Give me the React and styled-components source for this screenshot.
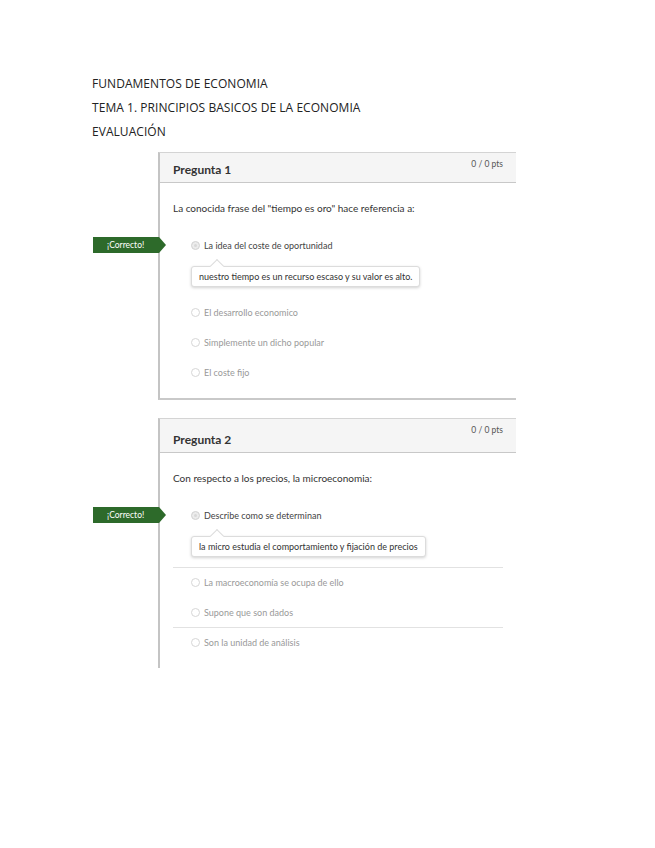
import styled, { createGlobalStyle } from "styled-components";

const GlobalStyle = createGlobalStyle`
  html, body {
    margin: 0;
    padding: 0;
    background: #ffffff;
  }
`;

const questions = [
  {
    title: "Pregunta 1",
    header: 30,
    text: "La conocida frase del \"tiempo es oro\" hace referencia a:",
    answers: [
      {
        text: "La idea del coste de oportunidad",
        selected: true,
        comment: "nuestro tiempo es un recurso escaso y su valor es alto.",
      },
      { text: "El desarrollo economico" },
      { text: "Simplemente un dicho popular" },
      { text: "El coste fijo" },
    ],
    closed: true,
  },
  {
    title: "Pregunta 2",
    header: 34,
    text: "Con respecto a los precios, la microeconomia:",
    answers: [
      {
        text: "Describe como se determinan",
        selected: true,
        comment: "la micro estudia el comportamiento y fijación de precios",
      },
      { text: "La macroeconomía se ocupa de ello", divided: true },
      { text: "Supone que son dados" },
      { text: "Son la unidad de análisis", divided: true },
    ],
    closed: false,
  },
];

export default function App() {
  return (
    <>
      <GlobalStyle />
      <Page>
        <Heading>FUNDAMENTOS DE ECONOMIA</Heading>
        <Heading>TEMA 1. PRINCIPIOS BASICOS DE LA ECONOMIA</Heading>
        <Heading>EVALUACIÓN</Heading>

        {questions.map((q) => (
          <Card key={q.title} $closed={q.closed}>
            <CardHeader $height={q.header}>
              <CardTitle>{q.title}</CardTitle>
              <Points>0 / 0 pts</Points>
            </CardHeader>
            <CardBody>
              <QuestionText>{q.text}</QuestionText>
              <AnswerList>
                {q.answers.map((a) => (
                  <div key={a.text}>
                    <Answer $divided={a.divided}>
                      {a.selected && <Badge>¡Correcto!</Badge>}
                      <Radio $selected={a.selected} />
                      <AnswerText $selected={a.selected}>{a.text}</AnswerText>
                    </Answer>
                    {a.comment && <Comment>{a.comment}</Comment>}
                  </div>
                ))}
              </AnswerList>
            </CardBody>
          </Card>
        ))}
      </Page>
    </>
  );
}

const Page = styled.div`
  padding: 72px 0 120px 92px;
`;

const Heading = styled.div`
  font-family: "Open Sans", "DejaVu Sans", sans-serif;
  font-size: 12px;
  line-height: 24px;
  color: #222;
  letter-spacing: 0.05px;
`;

const Card = styled.div`
  margin: 8px 0 18px 66px;
  width: 356px;
  border-left: 2px solid #c4c4c4;
  border-top: 1px solid #d4d4d4;
  border-bottom: ${(p) => (p.$closed ? "2px solid #c9c9c9" : "none")};
`;

const CardHeader = styled.div`
  height: ${(p) => p.$height}px;
  background: #f5f5f5;
  border-bottom: 1px solid #c8c8c8;
  display: flex;
  justify-content: space-between;
  align-items: flex-start;
  padding: 0 13px 0 13px;
  box-sizing: border-box;
  font-family: Lato, "Open Sans", sans-serif;
`;

const CardTitle = styled.div`
  font-size: 12px;
  font-weight: 700;
  color: #333;
  align-self: flex-end;
  margin-bottom: 5px;
`;

const Points = styled.div`
  font-size: 8.5px;
  color: #555;
  margin-top: 6px;
`;

const CardBody = styled.div`
  padding: 17px 13px 11px 13px;
  font-family: Lato, "Open Sans", sans-serif;
`;

const QuestionText = styled.div`
  font-size: 10px;
  line-height: 16px;
  color: #333;
  margin-bottom: 14px;
`;

const AnswerList = styled.div`
  display: flex;
  flex-direction: column;
`;

const Answer = styled.div`
  position: relative;
  height: 30px;
  display: flex;
  align-items: center;
  padding-left: 18px;
  border-top: ${(p) => (p.$divided ? "1px solid #e2e2e2" : "none")};
  box-sizing: border-box;
`;

const Badge = styled.div`
  position: absolute;
  left: -80px;
  top: 50%;
  transform: translateY(-50%);
  height: 16px;
  width: 66px;
  background: #2d6a2a;
  color: #fff;
  font-size: 8.5px;
  line-height: 16px;
  padding-left: 14px;
  box-sizing: border-box;
  &::after {
    content: "";
    position: absolute;
    right: -7px;
    top: 0;
    border-left: 7px solid #2d6a2a;
    border-top: 8px solid transparent;
    border-bottom: 8px solid transparent;
  }
`;

const Radio = styled.span`
  width: 7px;
  height: 7px;
  border-radius: 50%;
  border: 1px solid #d6d6d6;
  background: ${(p) => (p.$selected ? "#d8d8d8" : "#fff")};
  box-shadow: ${(p) => (p.$selected ? "inset 0 0 0 2px #ececec" : "none")};
  margin-right: 4px;
  flex-shrink: 0;
`;

const AnswerText = styled.span`
  font-size: 9px;
  color: ${(p) => (p.$selected ? "#444" : "#999")};
`;

const Comment = styled.div`
  position: relative;
  align-self: flex-start;
  display: inline-block;
  margin: 6px 0 10px 18px;
  height: 19px;
  line-height: 19px;
  padding: 0 7px;
  font-size: 9px;
  color: #333;
  background: #fff;
  border: 1px solid #dcdcdc;
  border-radius: 3px;
  box-shadow: 0 1px 3px rgba(0, 0, 0, 0.18);
  &::before {
    content: "";
    position: absolute;
    left: 20px;
    top: -6px;
    width: 9px;
    height: 9px;
    background: #fff;
    border-left: 1px solid #dcdcdc;
    border-top: 1px solid #dcdcdc;
    transform: rotate(45deg);
  }
`;
